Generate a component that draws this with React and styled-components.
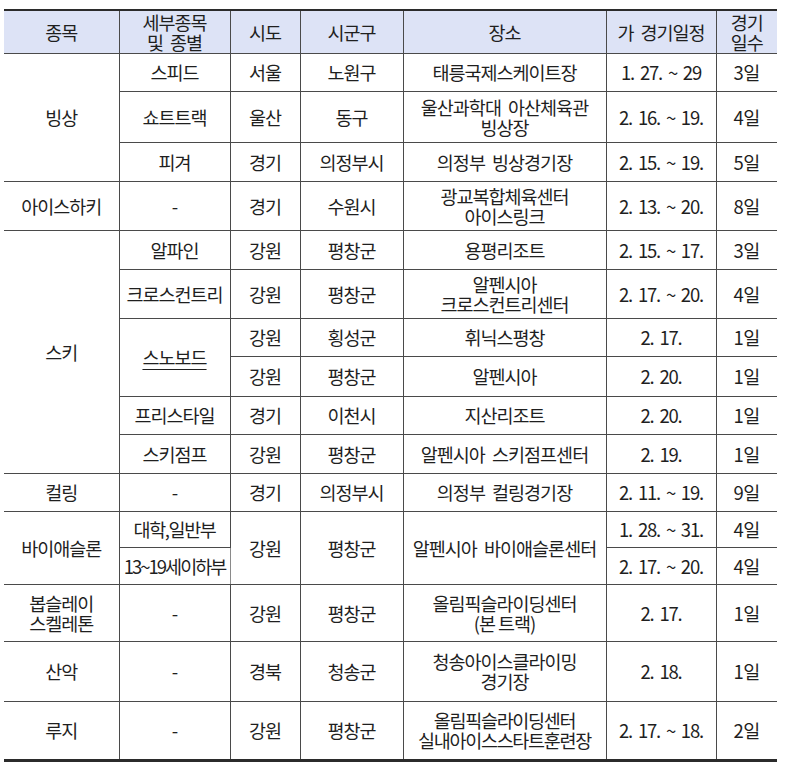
import React from "react";
import styled, { createGlobalStyle } from "styled-components";

const GlobalStyle = createGlobalStyle`
  body {
    margin: 0;
    background: #fff;
    font-family: "Noto Sans CJK KR", "Noto Sans", sans-serif;
    color: #1f1f1f;
  }
`;

const Page = styled.div`
  padding: 9px 12px 0 4px;
`;

const Table = styled.table`
  width: 773px;
  table-layout: fixed;
  border-collapse: collapse;
  border-top: 2px solid #2b2b2b;
  border-bottom: 3px solid #2b2b2b;
  font-size: 18.5px;
  letter-spacing: -1px;
  line-height: 20px;
`;

const Row = styled.tr`
  height: ${({ $h }) => $h}px;
`;

const Head = styled.th`
  background: #dde3f6;
  font-weight: 400;
  text-align: center;
  vertical-align: middle;
  padding: 0 2px;
  word-spacing: 4px;
  border: 1px solid #4a4a4a;
  border-top: none;
  &:first-child {
    border-left: none;
  }
  &:last-child {
    border-right: none;
  }
`;

const Cell = styled.td`
  text-align: center;
  vertical-align: middle;
  padding: 0 2px;
  border: 1px solid #4a4a4a;
  border-left-color: ${({ $soft }) => ($soft ? "#8a8a8a" : "#4a4a4a")};
  white-space: ${({ $pre }) => ($pre ? "pre" : "normal")};
  word-spacing: ${({ $ws }) => $ws || 0}px;
  letter-spacing: ${({ $ls }) => ($ls !== undefined ? $ls : -1)}px;
  text-decoration: ${({ $u }) => ($u ? "underline" : "none")};
  text-underline-offset: 4px;
  &:first-child {
    border-left: none;
  }
  &:last-child {
    border-right: none;
  }
`;

const DateCell = styled(Cell).attrs({ $pre: true, $ls: -1.2 })``;

const Days = styled(Cell)`
  letter-spacing: -0.5px;
`;

const widths = [115, 111, 70, 103, 203, 110, 61];

function Lines({ children }) {
  const parts = children.split("\n");
  return parts.map((p, i) => (
    <React.Fragment key={i}>
      {p}
      {i < parts.length - 1 && <br />}
    </React.Fragment>
  ));
}

export default function App() {
  return (
    <>
      <GlobalStyle />
      <Page>
        <Table>
          <colgroup>
            {widths.map((w, i) => (
              <col key={i} style={{ width: w }} />
            ))}
          </colgroup>
          <thead>
            <Row $h={43}>
              <Head>종목</Head>
              <Head>
                <Lines>{"세부종목\n및 종별"}</Lines>
              </Head>
              <Head>시도</Head>
              <Head>시군구</Head>
              <Head>장소</Head>
              <Head>가 경기일정</Head>
              <Head>
                <Lines>{"경기\n일수"}</Lines>
              </Head>
            </Row>
          </thead>
          <tbody>
            <Row $h={38}>
              <Cell rowSpan={3}>빙상</Cell>
              <Cell>스피드</Cell>
              <Cell $soft>서울</Cell>
              <Cell>노원구</Cell>
              <Cell>태릉국제스케이트장</Cell>
              <DateCell>{"1.  27.  ~  29"}</DateCell>
              <Days>3일</Days>
            </Row>
            <Row $h={51}>
              <Cell>쇼트트랙</Cell>
              <Cell $soft>울산</Cell>
              <Cell>동구</Cell>
              <Cell $ws={4}>
                <Lines>{"울산과학대 아산체육관\n빙상장"}</Lines>
              </Cell>
              <DateCell>{"2.  16.  ~  19."}</DateCell>
              <Days>4일</Days>
            </Row>
            <Row $h={39}>
              <Cell>피겨</Cell>
              <Cell $soft>경기</Cell>
              <Cell>의정부시</Cell>
              <Cell $ws={4}>의정부 빙상경기장</Cell>
              <DateCell>{"2.  15.  ~  19."}</DateCell>
              <Days>5일</Days>
            </Row>
            <Row $h={49}>
              <Cell>아이스하키</Cell>
              <Cell>-</Cell>
              <Cell $soft>경기</Cell>
              <Cell>수원시</Cell>
              <Cell>
                <Lines>{"광교복합체육센터\n아이스링크"}</Lines>
              </Cell>
              <DateCell>{"2.  13.  ~  20."}</DateCell>
              <Days>8일</Days>
            </Row>
            <Row $h={39}>
              <Cell rowSpan={6}>스키</Cell>
              <Cell>알파인</Cell>
              <Cell $soft>강원</Cell>
              <Cell>평창군</Cell>
              <Cell>용평리조트</Cell>
              <DateCell>{"2.  15.  ~  17."}</DateCell>
              <Days>3일</Days>
            </Row>
            <Row $h={49}>
              <Cell>크로스컨트리</Cell>
              <Cell $soft>강원</Cell>
              <Cell>평창군</Cell>
              <Cell>
                <Lines>{"알펜시아\n크로스컨트리센터"}</Lines>
              </Cell>
              <DateCell>{"2.  17.  ~  20."}</DateCell>
              <Days>4일</Days>
            </Row>
            <Row $h={38}>
              <Cell rowSpan={2} $u>
                스노보드
              </Cell>
              <Cell $soft>강원</Cell>
              <Cell>횡성군</Cell>
              <Cell>휘닉스평창</Cell>
              <DateCell>{"2.  17."}</DateCell>
              <Days>1일</Days>
            </Row>
            <Row $h={40}>
              <Cell $soft>강원</Cell>
              <Cell>평창군</Cell>
              <Cell>알펜시아</Cell>
              <DateCell>{"2.  20."}</DateCell>
              <Days>1일</Days>
            </Row>
            <Row $h={38}>
              <Cell>프리스타일</Cell>
              <Cell $soft>경기</Cell>
              <Cell>이천시</Cell>
              <Cell>지산리조트</Cell>
              <DateCell>{"2.  20."}</DateCell>
              <Days>1일</Days>
            </Row>
            <Row $h={39}>
              <Cell>스키점프</Cell>
              <Cell $soft>강원</Cell>
              <Cell>평창군</Cell>
              <Cell $ws={4}>알펜시아 스키점프센터</Cell>
              <DateCell>{"2.  19."}</DateCell>
              <Days>1일</Days>
            </Row>
            <Row $h={38}>
              <Cell>컬링</Cell>
              <Cell>-</Cell>
              <Cell $soft>경기</Cell>
              <Cell>의정부시</Cell>
              <Cell $ws={4}>의정부 컬링경기장</Cell>
              <DateCell>{"2.  11.  ~  19."}</DateCell>
              <Days>9일</Days>
            </Row>
            <Row $h={36}>
              <Cell rowSpan={2}>바이애슬론</Cell>
              <Cell $ls={-1.4}>대학,일반부</Cell>
              <Cell rowSpan={2} $soft>
                강원
              </Cell>
              <Cell rowSpan={2}>평창군</Cell>
              <Cell rowSpan={2} $ws={4}>
                알펜시아 바이애슬론센터
              </Cell>
              <DateCell>{"1.  28.  ~  31."}</DateCell>
              <Days>4일</Days>
            </Row>
            <Row $h={37}>
              <Cell $ls={-2}>13~19세이하부</Cell>
              <DateCell>{"2.  17.  ~  20."}</DateCell>
              <Days>4일</Days>
            </Row>
            <Row $h={57}>
              <Cell>
                <Lines>{"봅슬레이\n스켈레톤"}</Lines>
              </Cell>
              <Cell>-</Cell>
              <Cell $soft>강원</Cell>
              <Cell>평창군</Cell>
              <Cell>
                <Lines>{"올림픽슬라이딩센터\n(본 트랙)"}</Lines>
              </Cell>
              <DateCell>{"2.  17."}</DateCell>
              <Days>1일</Days>
            </Row>
            <Row $h={60}>
              <Cell>산악</Cell>
              <Cell>-</Cell>
              <Cell $soft>경북</Cell>
              <Cell>청송군</Cell>
              <Cell>
                <Lines>{"청송아이스클라이밍\n경기장"}</Lines>
              </Cell>
              <DateCell>{"2.  18."}</DateCell>
              <Days>1일</Days>
            </Row>
            <Row $h={59}>
              <Cell>루지</Cell>
              <Cell>-</Cell>
              <Cell $soft>강원</Cell>
              <Cell>평창군</Cell>
              <Cell $ls={-1.3}>
                <Lines>{"올림픽슬라이딩센터\n실내아이스스타트훈련장"}</Lines>
              </Cell>
              <DateCell>{"2.  17.  ~  18."}</DateCell>
              <Days>2일</Days>
            </Row>
          </tbody>
        </Table>
      </Page>
    </>
  );
}
